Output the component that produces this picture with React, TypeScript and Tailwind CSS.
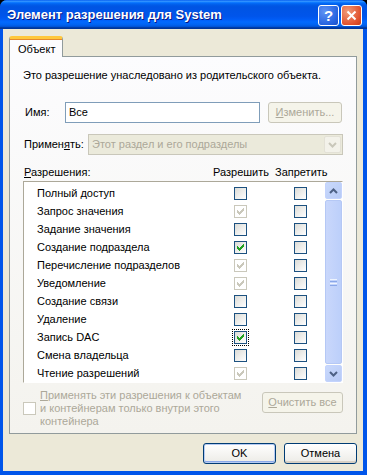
import React from "react";

type State = "empty" | "checked" | "inherited";

const rows: { label: string; allow: State; focus?: boolean }[] = [
  { label: "Полный доступ", allow: "empty" },
  { label: "Запрос значения", allow: "inherited" },
  { label: "Задание значения", allow: "empty" },
  { label: "Создание подраздела", allow: "checked" },
  { label: "Перечисление подразделов", allow: "inherited" },
  { label: "Уведомление", allow: "inherited" },
  { label: "Создание связи", allow: "empty" },
  { label: "Удаление", allow: "empty" },
  { label: "Запись DAC", allow: "checked", focus: true },
  { label: "Смена владельца", allow: "empty" },
  { label: "Чтение разрешений", allow: "inherited" },
];

function Check({ color }: { color: string }) {
  return (
    <svg width="7" height="7" viewBox="0 0 7 7" shapeRendering="crispEdges">
      <path d="M0 2h1v3h-1zM1 3h1v3h-1zM2 4h1v3h-1zM3 3h1v3h-1zM4 2h1v3h-1zM5 1h1v3h-1zM6 0h1v3h-1z" fill={color} />
    </svg>
  );
}

function Box({ state }: { state: State }) {
  if (state === "inherited") {
    return (
      <div className="w-[13px] h-[13px] border border-[#cac8bb] bg-white flex items-center justify-center">
        <Check color="#cac8bb" />
      </div>
    );
  }
  return (
    <div className="w-[13px] h-[13px] border border-[#1c5180] bg-[linear-gradient(135deg,#dcdcd7,#ffffff)] flex items-center justify-center">
      {state === "checked" && <Check color="#21a121" />}
    </div>
  );
}

function XpButton({ children, disabled, def, className }: { children: React.ReactNode; disabled?: boolean; def?: boolean; className: string }) {
  return (
    <div
      className={
        "h-[21px] rounded-[3px] border flex items-center justify-center " +
        (disabled
          ? "border-[#c9c7ba] bg-[#f5f4ea] text-[#aca899] "
          : def
          ? "border-[#003c74] bg-[linear-gradient(#ffffff,#ecebe6)] text-black shadow-[inset_0_0_0_1px_#b6cbf2,inset_0_-1px_0_1px_#8aa8e8] "
          : "border-[#003c74] bg-[linear-gradient(#ffffff,#ecebe6)] text-black shadow-[inset_0_-2px_0_#d6d0c5] ") +
        className
      }
    >
      {children}
    </div>
  );
}

function Chevron({ up, color }: { up?: boolean; color: string }) {
  return (
    <svg width="9" height="6" viewBox="0 0 9 6">
      <path d={up ? "M1 5 L4.5 1.5 L8 5" : "M1 1 L4.5 4.5 L8 1"} stroke={color} strokeWidth="2" fill="none" />
    </svg>
  );
}

export default function App() {
  return (
    <div className="w-[367px] h-[475px] bg-black font-['Liberation_Sans',Arial,sans-serif] text-[11px] text-black">
      <div className="w-full h-full rounded-t-[7px] overflow-hidden flex flex-col bg-[#0055ea]">
        {/* Title bar */}
        <div className="h-[29px] shrink-0 flex items-center pl-[7px] pr-[5px] bg-[linear-gradient(to_bottom,#0058ee_0%,#3593ff_4%,#288eff_6%,#127dff_8%,#036ffc_10%,#0262ee_14%,#0057e5_20%,#0054e3_24%,#0055eb_56%,#005bf5_66%,#026afe_76%,#0062ef_86%,#0052d6_92%,#0040ab_94%,#003092_100%)]">
          <span className="flex-1 text-white font-bold text-[13px] [text-shadow:1px_1px_0_#0a1883]">
            Элемент разрешения для System
          </span>
          <div className="flex gap-[2px] mt-[1px]">
            <div className="w-[21px] h-[21px] rounded-[3px] border border-white bg-[radial-gradient(circle_at_30%_30%,#5f93f4,#2663e0_70%,#1d4fc7)] flex items-center justify-center text-white font-bold text-[15px] leading-none">
              ?
            </div>
            <div className="w-[21px] h-[21px] rounded-[3px] border border-white bg-[radial-gradient(circle_at_30%_30%,#f19b7a,#e0502c_70%,#c33c1a)] flex items-center justify-center">
              <svg width="11" height="11" viewBox="0 0 11 11">
                <path d="M1.5 1.5 L9.5 9.5 M9.5 1.5 L1.5 9.5" stroke="white" strokeWidth="2" />
              </svg>
            </div>
          </div>
        </div>

        {/* Body */}
        <div className="flex-1 ml-[3px] mr-[4px] mb-[4px] bg-[#ece9d8] flex flex-col pt-[7px] px-[6px]">
          <div className="flex">
            <div className="relative z-10 w-[54px] h-[21px] bg-[#fcfcfe] border-x border-[#919b9c] border-t-[3px] border-t-[#ffc83c] rounded-t-[3px] pl-[8px] pt-[2px] shadow-[inset_0_1px_0_#e68b2c]">
              Объект
            </div>
          </div>
          <div className="-mt-px h-[378px] border border-[#919b9c] bg-[linear-gradient(#fcfcfe,#f4f3ee)] flex flex-col pl-[13px] pr-[13px] pt-[12px]">
            <div className="leading-[13px]">Это разрешение унаследовано из родительского объекта.</div>

            <div className="flex items-center mt-[20px] h-[21px]">
              <span className="w-[42px] pl-[2px]">Имя:</span>
              <div className="w-[195px] h-[21px] border border-[#7f9db9] bg-white pl-[3px] flex items-center">Все</div>
              <XpButton disabled className="w-[74px] ml-[8px]">
                <span>
                  <span className="underline">И</span>зменить...
                </span>
              </XpButton>
            </div>

            <div className="flex items-center mt-[11px] h-[21px]">
              <span className="w-[65px] pl-[1px]">
                Примен<span className="underline">я</span>ть:
              </span>
              <div className="flex-1 h-[21px] border border-[#c9c7ba] bg-[#ebeadb] flex items-center">
                <span className="flex-1 pl-[3px] text-[#aca899]">Этот раздел и его подразделы</span>
                <div className="w-[17px] h-[17px] mr-[1px] rounded-[2px] bg-[#f3f2ea] border border-[#e3e1d6] flex items-center justify-center">
                  <Chevron color="#c9c7ba" />
                </div>
              </div>
            </div>

            <div className="flex mt-[11px] leading-[13px]">
              <span className="w-[190px] pl-[1px]">
                <span className="underline">Р</span>азрешения:
              </span>
              <span className="w-[62px]">Разрешить</span>
              <span>Запретить</span>
            </div>

            {/* Permission list */}
            <div className="mt-[2px] h-[202px] border border-[#aca899] border-r-white border-b-white bg-white flex">
              <div className="flex-1 pt-[2px] pl-[13px]">
                {rows.map((r) => (
                  <div key={r.label} className="h-[18px] flex items-center">
                    <span className="w-[197px]">{r.label}</span>
                    <div className={r.focus ? "outline outline-1 outline-dotted outline-black outline-offset-[1px]" : ""}>
                      <Box state={r.allow} />
                    </div>
                    <div className="ml-[47px]">
                      <Box state="empty" />
                    </div>
                  </div>
                ))}
              </div>
              {/* Scrollbar */}
              <div className="w-[17px] bg-[#fefefb] flex flex-col">
                <div className="h-[17px] rounded-[2px] border border-[#c3d3fd] bg-[linear-gradient(135deg,#c9d9fc,#b7caf5)] flex items-center justify-center">
                  <Chevron up color="#4d6185" />
                </div>
                <div className="flex-1 my-px rounded-[2px] border border-[#b5c8f5] bg-[linear-gradient(90deg,#c9d7fb,#bccffa)] flex items-center justify-center">
                  <div className="flex flex-col gap-[1px]">
                    <div className="w-[7px] h-px bg-[#eef4fe]" />
                    <div className="w-[7px] h-px bg-[#8aa7e8]" />
                    <div className="w-[7px] h-px bg-[#eef4fe]" />
                    <div className="w-[7px] h-px bg-[#8aa7e8]" />
                  </div>
                </div>
                <div className="h-[17px] rounded-[2px] border border-[#c3d3fd] bg-[linear-gradient(135deg,#c9d9fc,#b7caf5)] flex items-center justify-center">
                  <Chevron color="#4d6185" />
                </div>
              </div>
            </div>

            <div className="flex mt-[6px]">
              <div className="flex items-center">
                <div className="w-[13px] h-[13px] border border-[#cac8bb] bg-white" />
              </div>
              <div className="w-[210px] ml-[4px] text-[#aca899] flex flex-col">
                <span className="h-[13px] leading-[13px] whitespace-nowrap">
                  <span className="underline">П</span>рименять эти разрешения к объектам
                </span>
                <span className="h-[13px] leading-[13px] whitespace-nowrap">и контейнерам только внутри этого</span>
                <span className="h-[13px] leading-[13px] whitespace-nowrap">контейнера</span>
              </div>
              <XpButton disabled className="w-[81px] ml-auto mt-[3px]">
                <span>
                  <span className="underline">О</span>чистить все
                </span>
              </XpButton>
            </div>
          </div>

          <div className="flex justify-end gap-[8px] mt-[9px]">
            <XpButton def className="w-[73px]">OK</XpButton>
            <XpButton className="w-[73px]">Отмена</XpButton>
          </div>
        </div>
      </div>
    </div>
  );
}
